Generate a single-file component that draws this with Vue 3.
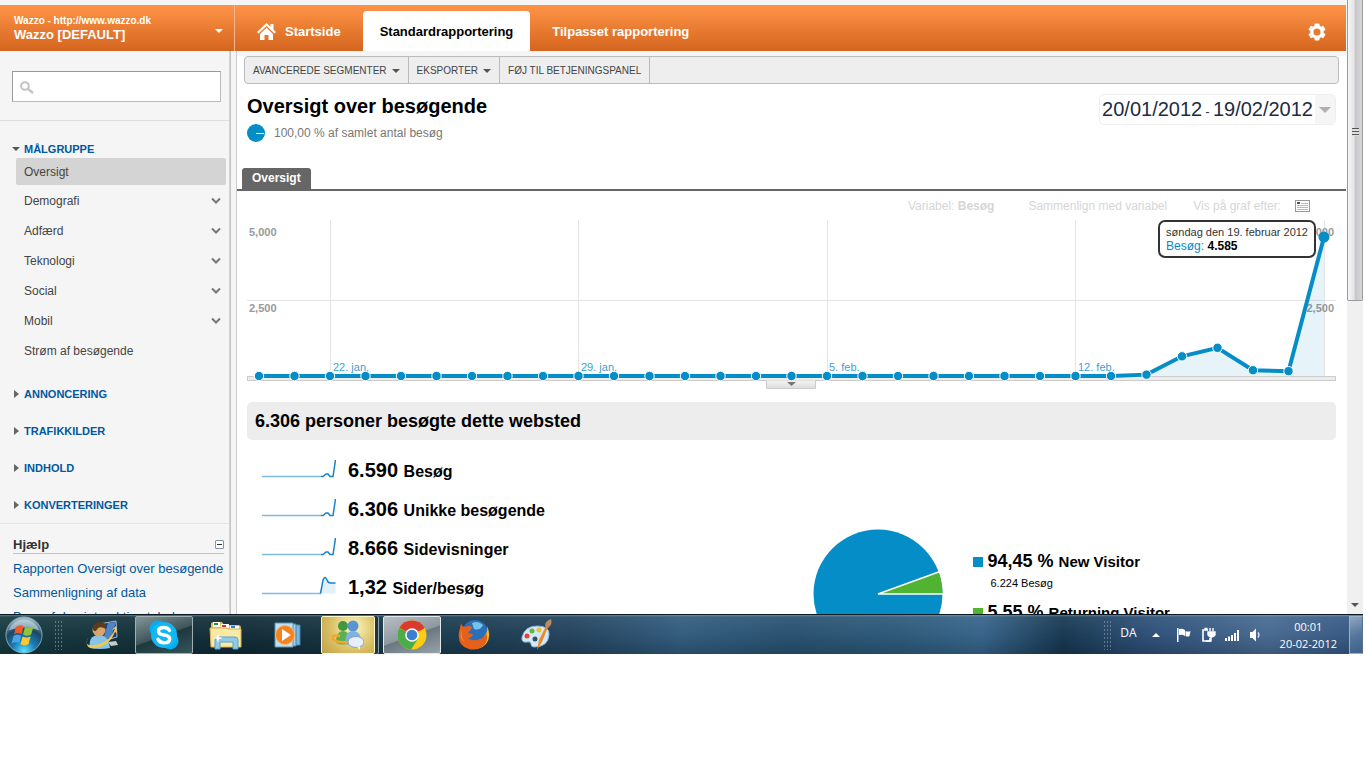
<template>
  <div class="desktop">
    <div class="browser">
      <div class="page">
        <header class="topbar">
          <button class="account" type="button">
            <span>
              <small>Wazzo - http://www.wazzo.dk</small>
              <strong>Wazzo [DEFAULT]</strong>
            </span>
            <i class="caret caret-white" />
          </button>
          <nav class="tabs">
            <a href="#" class="tab">
              <svg width="19" height="17" viewBox="0 0 19 17" fill="#fff">
                <path d="M9.5 0 0 9l1.5 1.6 8-7.5 8 7.5L19 9l-2.5-2.4V1h-3v2.7z" />
                <path d="M9.5 4.8 3 11v6h4.5v-5h4v5H16v-6z" />
              </svg>
              Startside
            </a>
            <a href="#" class="tab tab-active">Standardrapportering</a>
            <a href="#" class="tab">Tilpasset rapportering</a>
          </nav>
          <button class="settings" type="button" aria-label="Indstillinger">
            <svg width="18" height="18" viewBox="-9 -9 18 18">
              <g fill="#fff">
                <rect v-for="a in [0, 60, 120]" :key="a" x="-2.5" y="-8.6" width="5" height="17.2" rx="1" :transform="`rotate(${a})`" />
              </g>
              <circle r="5" fill="none" stroke="#fff" stroke-width="3.4" />
              <circle r="3.5" fill="#e57a30" />
            </svg>
          </button>
        </header>

        <div class="columns">
          <aside class="sidebar">
            <div class="search">
              <input id="search" type="text" aria-label="Søg" />
              <svg width="14" height="13" viewBox="0 0 14 13" fill="none" stroke="#c4c4c4">
                <circle cx="5" cy="5" r="3.8" stroke-width="2" />
                <path d="m8 8 5 4" stroke-width="2.6" />
              </svg>
            </div>
            <div class="menu">
              <a href="#" class="group first"><i class="caret" />MÅLGRUPPE</a>
              <a href="#" class="item selected">Oversigt</a>
              <a v-for="item in items" :key="item.name" href="#" class="item">
                {{ item.name }}
                <svg v-if="item.sub" width="10" height="8" viewBox="0 0 10 8" fill="none" stroke="#777" stroke-width="2">
                  <path d="m1 1.5 4 4 4-4" />
                </svg>
              </a>
              <div class="groups">
                <a v-for="g in groups" :key="g" href="#" class="group"><i class="arrow" />{{ g }}</a>
              </div>
            </div>
            <div class="help">
              <h3>
                Hjælp
                <button type="button" aria-label="Skjul" />
              </h3>
              <a v-for="h in help" :key="h" href="#">{{ h }}</a>
            </div>
          </aside>
          <div class="splitter" />

          <main class="main">
            <div class="toolbar">
              <button type="button">AVANCEREDE SEGMENTER<i class="caret" /></button>
              <button type="button">EKSPORTER<i class="caret" /></button>
              <button type="button">FØJ TIL BETJENINGSPANEL</button>
            </div>

            <div class="heading">
              <div>
                <h1>Oversigt over besøgende</h1>
                <p>
                  <svg width="18" height="18" viewBox="0 0 18 18">
                    <circle cx="9" cy="9" r="9" fill="#058dc7" />
                    <path d="M9 9.5h8" stroke="#fff" />
                  </svg>
                  100,00 % af samlet antal besøg
                </p>
              </div>
              <button class="daterange" type="button">
                <span>20/01/2012<small> - </small>19/02/2012</span>
                <b><i class="caret caret-large" /></b>
              </button>
            </div>

            <div class="report-tabs"><a href="#">Oversigt</a></div>

            <div class="report">
              <div class="graph-options">
                <span>Variabel: <b>Besøg</b></span>
                <span class="compare">Sammenlign med variabel</span>
                <span class="by">Vis på graf efter:</span>
                <svg width="15" height="12" viewBox="0 0 15 12" fill="none" stroke="#999">
                  <rect x=".5" y=".5" width="14" height="11" />
                  <path d="M6 3.5h7M2 5.5h11M2 7.5h11M2 9.5h11" stroke="#bbb" />
                  <path d="M2 3h3" stroke="#555" stroke-width="2" />
                </svg>
              </div>

              <div class="graph">
                <svg viewBox="0 0 1089 169">
                  <defs>
                    <linearGradient id="handle" x2="0" y2="1">
                      <stop stop-color="#f4f4f4" />
                      <stop offset="1" stop-color="#ddd" />
                    </linearGradient>
                  </defs>
                  <path d="M0 80.5h1089M83.5 0v156M331.5 0v156M580.5 0v156M828.5 0v156M1077.5 0v156" stroke="#e4e4e4" />
                  <rect x=".5" y="156.5" width="1088" height="4" fill="#ededed" stroke="#ccc" />
                  <path d="M519.5 160.5v8h49v-8" fill="url(#handle)" stroke="#ccc" />
                  <path d="M540 162h9l-4.500 4z" fill="#777" />
                  <g class="scale">
                    <text x="2" y="16">5,000</text>
                    <text x="2" y="92">2,500</text>
                    <text x="1087" y="16" text-anchor="end">5,000</text>
                    <text x="1087" y="92" text-anchor="end">2,500</text>
                  </g>
                  <g class="dates">
                    <text v-for="d in dates" :key="d.label" :x="d.x" y="151">{{ d.label }}</text>
                  </g>
                  <path :d="`M12 156L${line}V156z`" fill="#058dc7" fill-opacity=".1" />
                  <polyline :points="line" fill="none" stroke="#058dc7" stroke-width="4" />
                  <circle
                    v-for="(p, i) in points"
                    :key="i"
                    :cx="p.x"
                    :cy="p.y"
                    :r="i === points.length - 1 ? 5.5 : 4.7"
                    fill="#058dc7"
                    stroke="#fff"
                    :stroke-width="i === points.length - 1 ? 0 : 1"
                  />
                </svg>
                <div class="tooltip">
                  <div>søndag den 19. februar 2012</div>
                  <p>Besøg: <b>4.585</b></p>
                </div>
              </div>

              <h2>6.306 personer besøgte dette websted</h2>

              <div class="overview">
                <ul class="stats">
                  <li v-for="s in stats" :key="s.label">
                    <svg width="74" height="20" viewBox="0 0 74 20" fill="none">
                      <path v-if="s.area" d="M58.500 17.500 61 4l2-2 3 5 7.500 0v10.500z" fill="#e2f0f9" />
                      <path d="M0 17.500h59" stroke="#80bbe6" stroke-width="1.500" />
                      <path :d="s.path" stroke="#1682cb" stroke-width="1.500" />
                    </svg>
                    <span>{{ s.value }} <small>{{ s.label }}</small></span>
                  </li>
                </ul>
                <div class="visitors">
                  <svg width="130" height="130" viewBox="-65 -65 130 130">
                    <circle r="64.500" fill="#058dc7" />
                    <path d="M0 0 60.600-22A64.500 64.500 0 0 1 64.500 0z" fill="#50b432" />
                    <path d="M62-22.500 0 0h65" fill="none" stroke="#fff" stroke-width="1.500" />
                  </svg>
                  <dl>
                    <dt><i class="blue" />94,45 % <small>New Visitor</small></dt>
                    <dd>6.224 Besøg</dd>
                    <dt><i class="green" />5,55 % <small>Returning Visitor</small></dt>
                    <dd>366 Besøg</dd>
                  </dl>
                </div>
              </div>
            </div>
          </main>
        </div>
      </div>

      <div class="scrollbar">
        <div class="thumb"><i /></div>
        <span class="caret" />
      </div>
    </div>

    <footer class="taskbar">
      <button class="start" type="button" aria-label="Start">
        <svg width="40" height="38" viewBox="0 0 40 40">
          <defs>
            <radialGradient id="orb" cx=".5" cy=".95" r=".9">
              <stop stop-color="#5fe3ff" />
              <stop offset=".35" stop-color="#1b7fb8" />
              <stop offset=".7" stop-color="#1b4666" />
              <stop offset="1" stop-color="#9fb9c6" />
            </radialGradient>
          </defs>
          <circle cx="20" cy="20" r="19" fill="url(#orb)" stroke="#86a9b8" />
          <path d="M4 15a17 17 0 0 1 32 0q-15-6-32 0z" fill="#dcecf2" opacity=".55" />
          <path d="M11.500 11.500q4-3 8-.5l-2 8q-4-2.500-8 .3z" fill="#ee5a2a" />
          <path d="M21 11.500q4 2.500 9-.5l-2.500 8.500q-4.500 2.500-8.500 0z" fill="#8cc63e" />
          <path d="M9 21q4-2.500 8-.2l-2 7.700q-4-2-8 .5z" fill="#4aa5e8" />
          <path d="M18.500 21.500q4 2.300 8.500 0l-2.300 8q-4.200 2.500-8.400 0z" fill="#fdc92e" />
        </svg>
      </button>
      <i class="grip" />
      <div class="apps">
        <button type="button" aria-label="Messenger-kontakt">
          <svg width="34" height="30" viewBox="0 0 34 30">
            <path d="m14 4 17-3 1 16-14 4z" fill="#173a80" stroke="#a8bcd0" />
            <path d="m23 3 8-1-5 16-8 2z" fill="#6ba3e3" opacity=".7" />
            <path d="m23 22 8-1 2 4-7 1z" fill="#c6cbc8" />
            <path d="M5 28q-2-12 8-13 10-1 12 13-10 2-20 0z" fill="#86c4e8" />
            <circle cx="14" cy="10" r="6.500" fill="#d9a46a" />
            <path d="M8 10Q7 2 15 2q7 0 6 7-5-3-8-1-2 5-5 2z" fill="#5a3c1c" />
            <path d="M3 18Q-2 27 10 25 24 23 30 9l-3 1 4-4 1 7-2-1Q25 25 12 28-2 30 3 18z" fill="#f4c84d" />
          </svg>
        </button>
        <button type="button" class="open" aria-label="Skype">
          <svg width="32" height="32" viewBox="0 0 32 32">
            <circle cx="10" cy="10" r="8.500" fill="#00aff0" />
            <circle cx="22" cy="22" r="8.500" fill="#00aff0" />
            <circle cx="16" cy="16" r="13" fill="#12b6f2" />
            <path d="M21.500 11.500Q20 8.500 16 8.500q-5.500 0-5.500 3.700 0 3 5.500 3.800 5.700.8 5.700 4 0 3.800-5.700 3.800-4.500 0-6-3.500" fill="none" stroke="#fff" stroke-width="3.500" stroke-linecap="round" />
          </svg>
        </button>
        <button type="button" aria-label="Stifinder">
          <svg width="34" height="30" viewBox="0 0 34 30">
            <path d="M2 4q0-2 3-2h8l2 3h14q3 0 3 3v19H2z" fill="#e3bd5b" />
            <path d="M4 2h7v5H4z" fill="#fff" /><path d="M5 3h4v2H5z" fill="#1a9c3a" />
            <path d="M12 4h8v4h-8z" fill="#fff" /><path d="M13 5h4v2h-4z" fill="#d9342b" />
            <path d="M21 6h9v3h-9z" fill="#fff" /><path d="M22 6h4v2h-4z" fill="#2b83d4" />
            <path d="M1 8h16l3 1h12v18H2z" fill="#f9e9a2" stroke="#d8b354" />
            <path d="M6 29V20q0-3 3-3h17q3 0 3 3v9h-5v-7H11v7z" fill="#8fcbe8" stroke="#5ba3cb" />
            <path d="m9 13 1 4 4 1-4 1-1 4-1-4-4-1 4-1z" fill="#fff" />
          </svg>
        </button>
        <button type="button" aria-label="Medieafspiller">
          <svg width="30" height="28" viewBox="0 0 30 28">
            <path d="M13 4h14v20H13z" fill="#7db8dc" stroke="#4384ae" />
            <path d="M10 3h13v22H10z" fill="#9fd0ec" stroke="#4384ae" />
            <path d="M2 2h18v24H2z" fill="#bfe0f2" stroke="#5896bd" />
            <circle cx="12" cy="14" r="9.500" fill="#f58220" stroke="#fcb66a" />
            <path d="m9 8 9 6-9 6z" fill="#fff" />
          </svg>
        </button>
        <button type="button" class="alert" aria-label="Messenger">
          <svg width="32" height="30" viewBox="0 0 32 30">
            <circle cx="11" cy="6" r="5" fill="#3f9a3c" />
            <path d="M4 23q0-12 7-12t8 12q-8 3-15 0z" fill="#5cb04e" />
            <circle cx="21" cy="6" r="5.500" fill="#5795d4" />
            <path d="M13 24q0-13 8-13t9 13q-8 3-17 0z" fill="#7fb2e0" />
            <path d="M8 16q-10-2-7 3 3 4 14 3" fill="none" stroke="#f3a72c" stroke-width="2.500" />
            <ellipse cx="24" cy="22" rx="8" ry="5.500" fill="#e7effa" stroke="#8aa4c4" />
            <path d="m25 27 3 3v-4z" fill="#e7effa" />
          </svg>
        </button>
        <button type="button" class="active" aria-label="Chrome">
          <svg width="30" height="30" viewBox="-15 -15 30 30">
            <circle r="14.500" fill="#fccd12" />
            <path d="M0 0-12.600-7.200A14.500 14.500 0 0 1 12.600-7.200z" fill="#db3b2c" />
            <path d="M0-7.500h12.800L9-4.500H0z" fill="#db3b2c" />
            <path d="M-12.600-7.200A14.500 14.500 0 0 0-.8 14.500L6 3.500 0 0z" fill="#4bac48" />
            <circle r="6.800" fill="#fff" />
            <circle r="5.300" fill="#3b7fd0" />
          </svg>
        </button>
        <button type="button" aria-label="Firefox">
          <svg width="32" height="32" viewBox="0 0 32 32">
            <circle cx="17" cy="14" r="13" fill="#2a70b8" />
            <path d="M14 4q6-3 11 2-3 6-9 4z" fill="#74c2ee" />
            <path d="M29 7q5 10-1 18-7 7-16 4 14-1 14-12 4-3 3-10z" fill="#f9b52b" />
            <path d="M3 4q1 4 4 4 4-2 7 0-1 4-4 5 1 2 5 2-1 4-5 4 5 4 12 1 5-2 6-6 3 8-3 13-6 5-14 3Q-1 27 1 13q1-3 2-9z" fill="#e4601b" />
            <path d="M4 10q-2 8 3 14-7-5-3-14z" fill="#f89a2d" />
          </svg>
        </button>
        <button type="button" aria-label="Paint">
          <svg width="34" height="32" viewBox="0 0 34 32">
            <path d="M3 18Q6 7 18 7q13 0 12 9-1 12-15 12-3 0-3-3t-4-2q-6 1-5-5z" fill="#d5e8f5" stroke="#8eb3cf" />
            <circle cx="8" cy="17" r="2.500" fill="#e44432" />
            <circle cx="13" cy="12" r="2.500" fill="#5cb947" />
            <circle cx="20" cy="11" r="2.500" fill="#f2be2c" />
            <circle cx="16" cy="20" r="2.500" fill="#31536d" />
            <path d="m18 31 2-10 7-14 2 1-6 15z" fill="#e88b2c" />
            <path d="M26 7q0-5 6-7 2 5-3 9z" fill="#b98d60" />
          </svg>
        </button>
      </div>

      <div class="tray">
        <i class="grip" />
        <span class="lang">DA</span>
        <i class="up" />
        <svg width="16" height="16" viewBox="0 0 16 16" fill="#fff">
          <path d="M1 1h1.500v14H1zM3 2q3-1 6 1v6Q6 7 3 8zM9.500 4q3 1 5 0l-1 5q-2 1-4 0z" />
        </svg>
        <svg width="16" height="16" viewBox="0 0 16 16" fill="none" stroke="#fff">
          <path d="M8 3H3v11h7v-3M4.500 1.500h3" stroke-width="1.600" />
          <path d="M10 1v3M13 1v3M8 5h7v3q-1 2-3.500 2T8 8z" fill="#fff" stroke-width="1.400" />
          <path d="M11 10v4H6" stroke-width="1.400" />
        </svg>
        <svg width="16" height="16" viewBox="0 0 16 16" fill="#fff">
          <path d="M1 11h2v3H1zM4 9.500h2V14H4zM7 8h2v6H7zM10 6h2v8h-2zM13 3h2v11h-2z" />
        </svg>
        <svg width="16" height="16" viewBox="0 0 16 16" fill="#fff">
          <path d="M2 5h2.500L8 1.500v13L4.500 11H2z" />
          <path d="M10 5.500q2 2.500 0 5" fill="none" stroke="#dbe4ee" stroke-width="1.300" />
        </svg>
        <time>00:01<br />20-02-2012</time>
      </div>
      <button class="show-desktop" type="button" aria-label="Vis skrivebord" />
    </footer>
  </div>
</template>

<script setup>
import { computed } from 'vue'

const items = [
  { name: 'Demografi', sub: true },
  { name: 'Adfærd', sub: true },
  { name: 'Teknologi', sub: true },
  { name: 'Social', sub: true },
  { name: 'Mobil', sub: true },
  { name: 'Strøm af besøgende', sub: false },
]
const groups = ['ANNONCERING', 'TRAFIKKILDER', 'INDHOLD', 'KONVERTERINGER']
const help = ['Rapporten Oversigt over besøgende', 'Sammenligning af data', 'Brug af den interaktive tabel']

// besøg pr. dag, 20. jan. - 19. feb.
const visits = [...Array(25).fill(0), 45, 650, 930, 190, 160, 4585]
const points = computed(() =>
  visits.map((v, i) => ({ x: 12 + i * 35.5, y: 156 - v * 0.0303 }))
)
const line = computed(() => points.value.map((p) => `${p.x},${p.y}`).join(' '))

const dates = [
  { label: '22. jan.', x: 86 },
  { label: '29. jan.', x: 334 },
  { label: '5. feb.', x: 582 },
  { label: '12. feb.', x: 831 },
]

const spike = 'M59 17.500h2l3-2.500h2l2 2.500h3L73.500 1'
const stats = [
  { value: '6.590', label: 'Besøg', path: spike },
  { value: '6.306', label: 'Unikke besøgende', path: spike },
  { value: '8.666', label: 'Sidevisninger', path: spike },
  { value: '1,32', label: 'Sider/besøg', path: 'M58.500 17.500 61 4q2-5 4 0 1 3 3.500 3h5', area: true },
]
</script>

<style>
body {
  margin: 0;
  background: #fff;
}
</style>

<style scoped>
.desktop {
  display: flex;
  flex-direction: column;
  height: calc(100vh - 114px);
  margin-right: 3px;
  font-family: "Liberation Sans", Arial, sans-serif;
  font-size: 12px;
  color: #444;
}

button {
  font: inherit;
  color: inherit;
  border: 0;
  padding: 0;
  background: none;
}

a {
  color: inherit;
  text-decoration: none;
}

svg {
  display: block;
  flex: none;
}

.caret {
  display: inline-block;
  border: 4px solid transparent;
  border-top-color: #555;
  border-bottom: 0;
}

.caret-white {
  border-top-color: #fff;
}

.caret-large {
  border-width: 6px;
  border-bottom: 0;
  border-top-color: #b0b0b0;
}

.browser {
  flex: 1;
  display: flex;
  min-height: 0;
  overflow: hidden;
}

.page {
  flex: 1;
  display: flex;
  flex-direction: column;
  min-width: 0;
  padding-top: 5px;
  background: #f5f5f5;
}

/* orange bar */
.topbar {
  display: flex;
  flex: none;
  height: 46px;
  color: #fff;
  font-size: 13px;
  font-weight: bold;
  background: linear-gradient(#ff9447, #d4651e);
}

.account {
  display: flex;
  align-items: center;
  justify-content: space-between;
  width: 235px;
  padding: 0 11px 0 14px;
  box-sizing: border-box;
  border-right: 1px solid #f6b58a;
  text-align: left;
  line-height: 14px;
}

.account small {
  display: block;
  font-size: 10px;
}

.account .caret {
  margin-top: 6px;
}

.account strong {
  display: block;
}

.tabs {
  flex: 1;
  display: flex;
  padding-top: 6px;
}

.tab {
  display: flex;
  align-items: center;
  gap: 9px;
  padding: 0 22px;
}

.tab-active {
  padding: 0 17px;
  color: #000;
  background: #fff;
  border-radius: 4px 4px 0 0;
}

.settings {
  padding: 8px 20px 0;
}

.columns {
  flex: 1;
  display: flex;
  min-height: 0;
  overflow: hidden;
}

/* left menu */
.sidebar {
  width: 229px;
  flex: none;
}

.search {
  position: relative;
  padding: 20px 8px 18px 12px;
  border-bottom: 1px solid #ddd;
}

.search input {
  display: block;
  width: 100%;
  height: 31px;
  box-sizing: border-box;
  padding: 0 8px 0 28px;
  border: 1px solid #bbb;
  border-top-color: #999;
  border-left-color: #999;
  background: #fff;
  font: inherit;
}

.search svg {
  position: absolute;
  left: 20px;
  top: 30px;
}

.menu {
  padding: 18px 3px 0 0;
  border-bottom: 1px solid #e4e4e4;
}

.group {
  display: flex;
  align-items: center;
  height: 37px;
  color: #0058a0;
  font-size: 11px;
  font-weight: bold;
}

.group.first {
  height: 19px;
}

.group i {
  margin: 0 4px 0 12px;
}

.group .arrow {
  width: 0;
  height: 0;
  margin: 0 5px 0 14px;
  border: 4px solid transparent;
  border-left: 5px solid #666;
  border-right: 0;
}

.item {
  display: flex;
  align-items: center;
  justify-content: space-between;
  height: 30px;
  padding: 0 5px 0 24px;
}

.selected {
  height: 27px;
  margin: 0 0 1px 16px;
  padding-left: 8px;
  border-radius: 2px;
  background: #d4d4d4;
}

.groups {
  padding-top: 9px;
}

.help {
  padding: 12px 5px 0 13px;
}

.help h3 {
  display: flex;
  align-items: center;
  justify-content: space-between;
  height: 17px;
  margin: 0 0 3px;
  border-bottom: 1px solid #c4c4c4;
  color: #333;
  font-size: 13px;
}

.help button {
  width: 9px;
  height: 9px;
  box-sizing: border-box;
  border: 1px solid #8395a8;
  border-radius: 1px;
  background: linear-gradient(#333, #333) center / 5px 1px no-repeat #fff;
}

.help a {
  display: block;
  line-height: 24px;
  color: #0058a0;
  font-size: 13px;
  white-space: nowrap;
}

.splitter {
  width: 8px;
  flex: none;
  box-sizing: border-box;
  border-right: 1px solid #ccc;
  background: linear-gradient(to right, #ddd, #bbb 2px, #f5f5f5 2px);
}

/* report */
.main {
  flex: 1;
  min-width: 0;
  border-top: 5px solid #f5f5f5;
  background: #fff;
}

.toolbar {
  display: flex;
  margin: 0 7px;
  height: 28px;
  box-sizing: border-box;
  border: 1px solid #bbb;
  border-radius: 4px;
  background: #eee;
  font-size: 10px;
}

.toolbar button {
  padding: 0 8px;
  border-right: 1px solid #bbb;
}

.toolbar .caret {
  margin: 0 0 1px 5px;
}

.heading {
  display: flex;
  justify-content: space-between;
  align-items: flex-start;
  padding: 10px 10px 25px;
}

h1 {
  margin: 0 0 4px;
  color: #000;
  font-size: 20px;
  line-height: 24px;
}

.heading p {
  display: flex;
  align-items: center;
  gap: 9px;
  height: 21px;
  margin: 0;
  color: #777;
}

.daterange {
  display: flex;
  border: 1px solid #eee;
  border-radius: 5px;
  height: 31px;
  align-items: stretch;
  color: #1c2c44;
  font-size: 20px;
  overflow: hidden;
}

.daterange span {
  padding: 0 2px;
  line-height: 29px;
}

.daterange small {
  font-size: 12px;
}

.daterange b {
  display: flex;
  align-items: center;
  padding: 0 4px;
  background: #f5f5f5;
}

.report-tabs {
  display: flex;
  padding-left: 5px;
  border-bottom: 2px solid #666;
}

.report-tabs a {
  padding: 0 10px;
  line-height: 21px;
  border-radius: 3px 3px 0 0;
  background: #666;
  color: #fff;
  font-weight: bold;
}

.report {
  padding: 0 10px;
}

.graph-options {
  display: flex;
  justify-content: flex-end;
  align-items: center;
  height: 29px;
  padding-right: 26px;
  color: #d6d6d6;
}

.compare {
  margin-left: 34px;
}

.by {
  margin: 0 14px 0 26px;
}

.graph {
  position: relative;
}

.graph > svg {
  width: 100%;
}

.scale {
  fill: #999;
  font-size: 11px;
  font-weight: bold;
}

.dates {
  fill: #3d9fd0;
  font-size: 11px;
}

.tooltip {
  position: absolute;
  right: 20px;
  top: 0;
  padding: 3px 6px;
  border: 2px solid #333;
  border-radius: 7px;
  background: #fff;
  color: #333;
  font-size: 11px;
  line-height: 14px;
}

.tooltip p {
  margin: 0;
  color: #058dc7;
  font-size: 12px;
}

.tooltip b {
  color: #000;
}

h2 {
  margin: 13px 0 0;
  padding: 0 8px;
  line-height: 38px;
  border-radius: 5px;
  background: #ededed;
  color: #000;
  font-size: 18px;
}

.overview {
  display: grid;
  grid-template-columns: 1fr 1fr;
  color: #000;
  font-weight: bold;
}

.stats {
  margin: 11px 0 0;
  padding: 0 0 0 15px;
  list-style: none;
  font-size: 20px;
}

.stats li {
  display: flex;
  align-items: center;
  gap: 12px;
  height: 39px;
}

.stats svg {
  margin-bottom: 4px;
}

.stats small {
  font-size: 16px;
}

.visitors {
  display: flex;
  align-items: flex-start;
  padding: 89px 0 0 21px;
}

.visitors dl {
  margin: 20px 0 0 30px;
}

.visitors dt {
  font-size: 18px;
  line-height: 24px;
}

.visitors dt i {
  display: inline-block;
  width: 10px;
  height: 10px;
  margin-right: 5px;
}

.visitors small {
  font-size: 15px;
}

.blue {
  background: #058dc7;
}

.green {
  background: #50b432;
}

.visitors dd {
  margin: 0 0 8px 18px;
  font-size: 11px;
  font-weight: normal;
  line-height: 18px;
}

.scrollbar {
  display: flex;
  flex-direction: column;
  justify-content: space-between;
  align-items: center;
  width: 17px;
  box-sizing: border-box;
  border-left: 1px solid #fff;
  background: #f0f0f0;
}

.scrollbar .caret {
  margin-bottom: 7px;
}

.thumb {
  display: flex;
  align-items: center;
  justify-content: center;
  width: 100%;
  height: 49%;
  box-sizing: border-box;
  border: 1px solid #999;
  border-top: 0;
  border-radius: 0 0 2px 2px;
  background: linear-gradient(to right, #f6f6f6, #e2e2e4 45%, #c6c6ca 50%, #d8d8da);
}

.thumb i {
  width: 7px;
  height: 8px;
  margin-bottom: 35px;
  background: repeating-linear-gradient(#555 0 1px, #ddd 1px 3px);
}

/* taskbar */
.taskbar {
  display: flex;
  align-items: center;
  height: 40px;
  flex: none;
  box-sizing: border-box;
  border-top: 1px solid #0b1a22;
  background:
    linear-gradient(rgba(170, 210, 225, 0.45), rgba(255, 255, 255, 0.08) 2px, rgba(255, 255, 255, 0.02) 50%, rgba(0, 0, 0, 0.15)),
    linear-gradient(to right, #14383f, #102a35 18%, #17384a 30%, #22425c 42%, #2f5a7c 50%, #26506f 58%, #2b5878 66%, #356288 72%, #15364f 78%, #2b4d75 84%, #466890 93%, #31547f);
  color: #fff;
}

.start {
  margin: 0 10px 0 4px;
}

.grip {
  width: 8px;
  height: 30px;
  background: radial-gradient(circle, #8da1a8 30%, transparent 40%) 0 0 / 3px 4px;
  opacity: 0.6;
}

.apps {
  display: flex;
  gap: 4px;
  margin-left: 11px;
}

.apps button {
  display: flex;
  align-items: center;
  justify-content: center;
  width: 58px;
  height: 38px;
  box-sizing: border-box;
}

.apps .open,
.apps .alert,
.apps .active {
  border: 1px solid #9fb0b4;
  border-radius: 2px;
  background: linear-gradient(160deg, #84969a, #3e5559 50%, #1d393f 52%, #35545a);
}

.apps .active {
  border-color: #e2e8ea;
  background: linear-gradient(160deg, #b8c0c5, #8d989f 50%, #6a7780 52%, #98a3aa);
}

.apps .alert {
  width: 54px;
  margin-right: 4px;
  border-color: #fdf6c9;
  background: radial-gradient(circle at 60% 30%, #fff8c0, #d8bd62 60%, #bfa04b);
  box-shadow: 3px 0 0 #1c3540, 4px 0 0 #8fa0a6;
}

.tray {
  display: flex;
  align-items: center;
  margin-left: auto;
  font-family: "Open Sans", sans-serif;
}

.tray svg {
  margin-left: 8px;
}

.lang {
  margin: 0 15px 4px 9px;
}

.up {
  margin-right: 8px;
  border: 4px solid transparent;
  border-bottom-color: #fff;
  border-top: 0;
}

time {
  margin: 0 12px 0 16px;
  font-size: 11px;
  line-height: 17px;
  text-align: center;
}

.show-desktop {
  width: 14px;
  height: 38px;
  border: 1px solid #9db0c6;
  border-right-color: #56708f;
  box-sizing: border-box;
  background: linear-gradient(160deg, #8ea6c0, #56779d 50%, #3c6089);
}
</style>
